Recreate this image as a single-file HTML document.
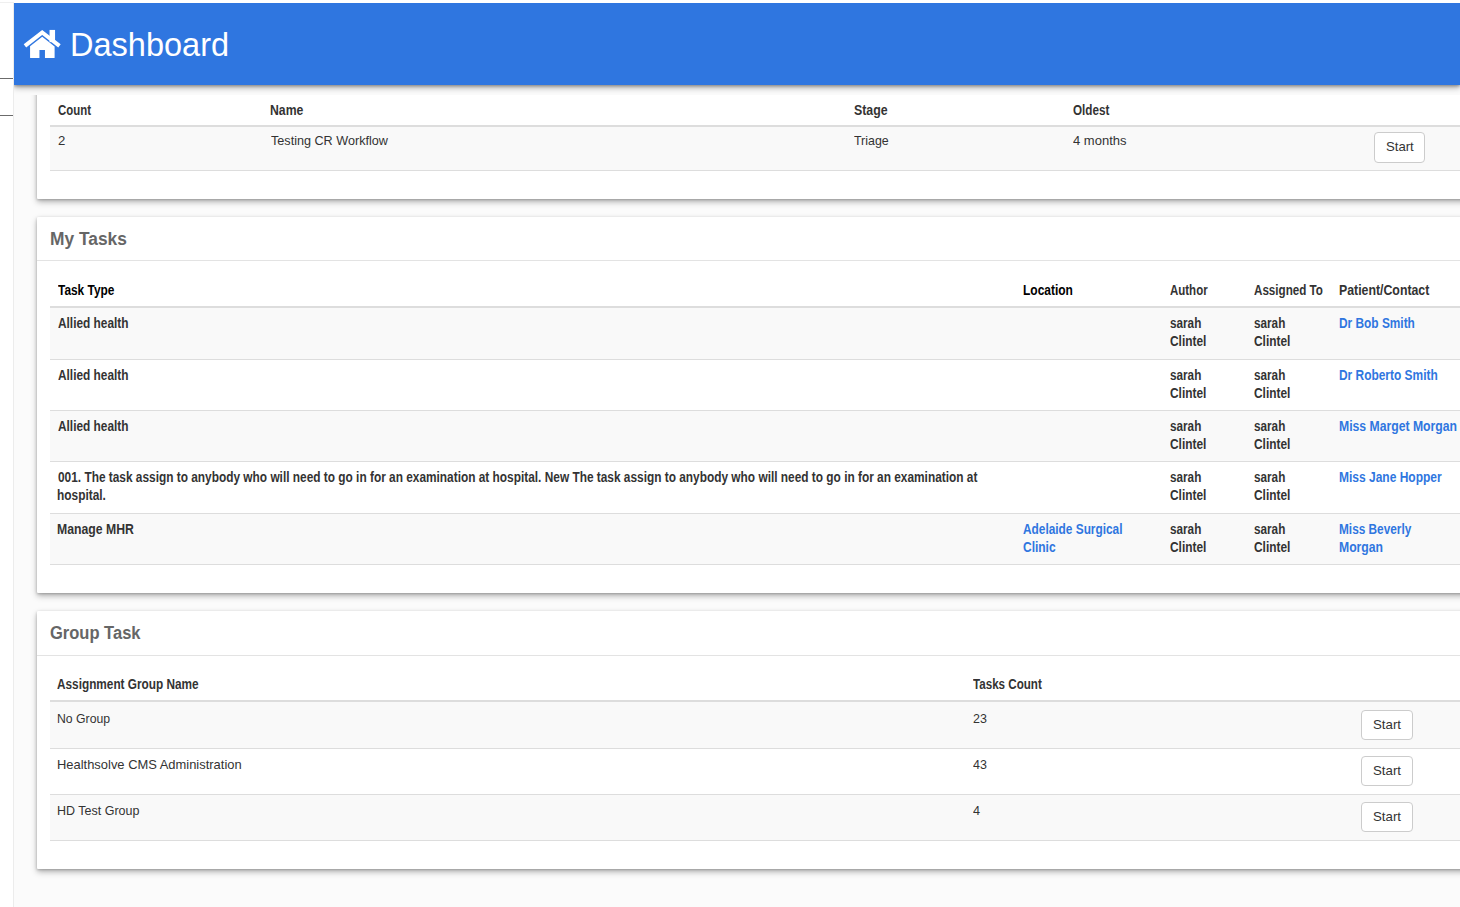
<!DOCTYPE html>
<html>
<head>
<meta charset="utf-8">
<title>Dashboard</title>
<style>
html,body{margin:0;padding:0;}
body{width:1460px;height:907px;overflow:hidden;background:#fff;position:relative;
  font-family:"Liberation Sans",sans-serif;font-size:13px;color:#333;}
#side{position:absolute;left:0;top:3px;width:13px;height:904px;background:#fff;border-right:1px solid #ececec;}
#side .ln{position:absolute;left:0;width:13px;height:1px;background:#6b6b6b;}
#topln{position:absolute;left:0;top:2px;width:14px;height:1px;background:#efefef;}
#main{position:absolute;left:14px;top:3px;width:1446px;height:904px;background:#fbfbfb;}
#hdr{position:absolute;left:14px;top:3px;width:1446px;height:82px;background:#2f76e0;
  box-shadow:0 3px 6px rgba(0,0,0,.28),0 1px 3px rgba(0,0,0,.32);z-index:5;clip-path:inset(0 0 -14px 0);}
#home{position:absolute;left:0;top:0;}
#clip{position:absolute;left:14px;top:95px;width:1446px;height:812px;overflow:hidden;}
.card{position:absolute;left:23px;width:1500px;background:#fff;border-radius:1px;
  box-shadow:0 3px 6px rgba(0,0,0,.28),0 1px 3px rgba(0,0,0,.22);}
.sep{position:absolute;left:0;width:1500px;height:1px;background:#e3e3e3;}
.hb{position:absolute;left:13px;width:1500px;height:2px;background:#ddd;}
.rb{position:absolute;left:13px;width:1500px;height:1px;background:#ddd;}
.st{position:absolute;left:13px;width:1500px;background:#f9f9f9;}
.btn{position:absolute;box-sizing:border-box;width:52px;height:30px;background:#fff;border:1px solid #ccc;border-radius:4px;}
.t{position:absolute;white-space:nowrap;transform-origin:0 0;z-index:10;}
</style>
</head>
<body>
<div id="side"><div class="ln" style="top:75px"></div><div class="ln" style="top:112px"></div></div>
<div id="topln"></div>
<div id="main"></div>
<div id="hdr">
<svg id="home" viewBox="14 3 60 82" width="60" height="82"><g fill="#fff">
<path d="M24.94 45.85 L42.2 32.47 L59.46 45.85" fill="none" stroke="#fff" stroke-width="4" stroke-linejoin="miter" stroke-linecap="butt"/>
<rect x="49.54" y="29.93" width="5.51" height="12.2"/>
<path d="M42.2 36.82 L54.61 46.44 V57.5 q0 .56 -.56 .56 H44.96 V50.06 H39.44 V58.06 H30.63 q-.56 0 -.56 -.56 V46.22 Z"/>
</g></svg>
</div>
<div id="clip">
  <!-- card 1: page y 40..198 => clip-local y -55..103 -->
  <div class="card" style="top:-55px;height:159px;">
    <div class="hb" style="top:85px"></div>
    <div class="st" style="top:87px;height:43px"></div>
    <div class="rb" style="top:130px"></div>
    <div class="btn" style="left:1337px;top:92px;width:51px;height:31px"></div>
  </div>
  <!-- card 2: page y 217..593 => local 122..498 -->
  <div class="card" style="top:122px;height:376px;">
    <div class="sep" style="top:43px"></div>
    <div class="hb" style="top:89px"></div>
    <div class="st" style="top:91px;height:51px"></div>
    <div class="rb" style="top:142px"></div>
    <div class="rb" style="top:193px"></div>
    <div class="st" style="top:194px;height:50px"></div>
    <div class="rb" style="top:244px"></div>
    <div class="rb" style="top:296px"></div>
    <div class="st" style="top:297px;height:50px"></div>
    <div class="rb" style="top:347px"></div>
  </div>
  <!-- card 3: page y 611..869 => local 516..774 -->
  <div class="card" style="top:516px;height:258px;">
    <div class="sep" style="top:44px"></div>
    <div class="hb" style="top:89px"></div>
    <div class="st" style="top:91px;height:46px"></div>
    <div class="rb" style="top:137px"></div>
    <div class="rb" style="top:183px"></div>
    <div class="st" style="top:184px;height:45px"></div>
    <div class="rb" style="top:229px"></div>
    <div class="btn" style="left:1324px;top:99px"></div>
    <div class="btn" style="left:1324px;top:145px"></div>
    <div class="btn" style="left:1324px;top:191px"></div>
  </div>
</div>
<span class="t" id="dash" style="left:70.21px;top:25.00px;font-size:33.5px;line-height:40px;font-weight:400;color:#fff;transform:scaleX(0.9706)">Dashboard</span>
<span class="t" id="h_count" style="left:58.24px;top:101.00px;font-size:14px;line-height:18px;font-weight:700;color:#333;transform:scaleX(0.8151)">Count</span>
<span class="t" id="h_name" style="left:270.08px;top:101.00px;font-size:14px;line-height:18px;font-weight:700;color:#333;transform:scaleX(0.8736)">Name</span>
<span class="t" id="h_stage" style="left:854.14px;top:101.00px;font-size:14px;line-height:18px;font-weight:700;color:#333;transform:scaleX(0.8823)">Stage</span>
<span class="t" id="h_oldest" style="left:1073.07px;top:101.00px;font-size:14px;line-height:18px;font-weight:700;color:#333;transform:scaleX(0.8340)">Oldest</span>
<span class="t" id="c1_2" style="left:58.02px;top:132.00px;font-size:13px;line-height:18px;font-weight:400;color:#333;transform:scaleX(1.0107)">2</span>
<span class="t" id="c1_name" style="left:271.15px;top:132.00px;font-size:13px;line-height:18px;font-weight:400;color:#333;transform:scaleX(0.9711)">Testing CR Workflow</span>
<span class="t" id="c1_stage" style="left:854.14px;top:132.00px;font-size:13px;line-height:18px;font-weight:400;color:#333;transform:scaleX(0.9538)">Triage</span>
<span class="t" id="c1_old" style="left:1073.05px;top:132.00px;font-size:13px;line-height:18px;font-weight:400;color:#333;transform:scaleX(0.9999)">4 months</span>
<span class="t" id="b0" style="left:1386.20px;top:138.00px;font-size:13px;line-height:18px;font-weight:400;color:#333;transform:scaleX(1.0116)">Start</span>
<span class="t" id="t_my" style="left:50.09px;top:227.00px;font-size:18px;line-height:24px;font-weight:700;color:#666;transform:scaleX(0.9642)">My Tasks</span>
<span class="t" id="h_tt" style="left:58.00px;top:281.00px;font-size:14px;line-height:18px;font-weight:700;color:#000;transform:scaleX(0.8488)">Task Type</span>
<span class="t" id="h_loc" style="left:1023.18px;top:281.00px;font-size:14px;line-height:18px;font-weight:700;color:#000;transform:scaleX(0.8560)">Location</span>
<span class="t" id="h_auth" style="left:1170.08px;top:281.00px;font-size:14px;line-height:18px;font-weight:700;color:#333;transform:scaleX(0.8199)">Author</span>
<span class="t" id="h_asg" style="left:1254.13px;top:281.00px;font-size:14px;line-height:18px;font-weight:700;color:#333;transform:scaleX(0.8310)">Assigned To</span>
<span class="t" id="h_pc" style="left:1339.02px;top:281.00px;font-size:14px;line-height:18px;font-weight:700;color:#333;transform:scaleX(0.8795)">Patient/Contact</span>
<span class="t" id="r0_tt" style="left:58.21px;top:314.00px;font-size:14px;line-height:18px;font-weight:700;color:#333;transform:scaleX(0.8465)">Allied health</span>
<span class="t" id="r0_a1" style="left:1169.81px;top:314.00px;font-size:14px;line-height:18px;font-weight:700;color:#333;transform:scaleX(0.8375)">sarah</span>
<span class="t" id="r0_a2" style="left:1170.06px;top:332.00px;font-size:14px;line-height:18px;font-weight:700;color:#333;transform:scaleX(0.8490)">Clintel</span>
<span class="t" id="r0_b1" style="left:1254.06px;top:314.00px;font-size:14px;line-height:18px;font-weight:700;color:#333;transform:scaleX(0.8375)">sarah</span>
<span class="t" id="r0_b2" style="left:1254.06px;top:332.00px;font-size:14px;line-height:18px;font-weight:700;color:#333;transform:scaleX(0.8490)">Clintel</span>
<span class="t" id="r1_tt" style="left:58.21px;top:366.00px;font-size:14px;line-height:18px;font-weight:700;color:#333;transform:scaleX(0.8465)">Allied health</span>
<span class="t" id="r1_a1" style="left:1169.81px;top:366.00px;font-size:14px;line-height:18px;font-weight:700;color:#333;transform:scaleX(0.8375)">sarah</span>
<span class="t" id="r1_a2" style="left:1170.06px;top:384.00px;font-size:14px;line-height:18px;font-weight:700;color:#333;transform:scaleX(0.8490)">Clintel</span>
<span class="t" id="r1_b1" style="left:1254.06px;top:366.00px;font-size:14px;line-height:18px;font-weight:700;color:#333;transform:scaleX(0.8375)">sarah</span>
<span class="t" id="r1_b2" style="left:1254.06px;top:384.00px;font-size:14px;line-height:18px;font-weight:700;color:#333;transform:scaleX(0.8490)">Clintel</span>
<span class="t" id="r2_tt" style="left:58.21px;top:417.00px;font-size:14px;line-height:18px;font-weight:700;color:#333;transform:scaleX(0.8465)">Allied health</span>
<span class="t" id="r2_a1" style="left:1169.81px;top:417.00px;font-size:14px;line-height:18px;font-weight:700;color:#333;transform:scaleX(0.8375)">sarah</span>
<span class="t" id="r2_a2" style="left:1170.06px;top:435.00px;font-size:14px;line-height:18px;font-weight:700;color:#333;transform:scaleX(0.8490)">Clintel</span>
<span class="t" id="r2_b1" style="left:1254.06px;top:417.00px;font-size:14px;line-height:18px;font-weight:700;color:#333;transform:scaleX(0.8375)">sarah</span>
<span class="t" id="r2_b2" style="left:1254.06px;top:435.00px;font-size:14px;line-height:18px;font-weight:700;color:#333;transform:scaleX(0.8490)">Clintel</span>
<span class="t" id="r3_tt" style="left:58.13px;top:468.00px;font-size:14px;line-height:18px;font-weight:700;color:#333;transform:scaleX(0.8478)">001. The task assign to anybody who will need to go in for an examination at hospital. New The task assign to anybody who will need to go in for an examination at</span>
<span class="t" id="r3_tt2" style="left:57.04px;top:486.00px;font-size:14px;line-height:18px;font-weight:700;color:#333;transform:scaleX(0.8491)">hospital.</span>
<span class="t" id="r3_a1" style="left:1169.81px;top:468.00px;font-size:14px;line-height:18px;font-weight:700;color:#333;transform:scaleX(0.8375)">sarah</span>
<span class="t" id="r3_a2" style="left:1170.06px;top:486.00px;font-size:14px;line-height:18px;font-weight:700;color:#333;transform:scaleX(0.8490)">Clintel</span>
<span class="t" id="r3_b1" style="left:1254.06px;top:468.00px;font-size:14px;line-height:18px;font-weight:700;color:#333;transform:scaleX(0.8375)">sarah</span>
<span class="t" id="r3_b2" style="left:1254.06px;top:486.00px;font-size:14px;line-height:18px;font-weight:700;color:#333;transform:scaleX(0.8490)">Clintel</span>
<span class="t" id="r4_tt" style="left:57.09px;top:520.00px;font-size:14px;line-height:18px;font-weight:700;color:#333;transform:scaleX(0.8745)">Manage MHR</span>
<span class="t" id="r4_a1" style="left:1169.81px;top:520.00px;font-size:14px;line-height:18px;font-weight:700;color:#333;transform:scaleX(0.8375)">sarah</span>
<span class="t" id="r4_a2" style="left:1170.06px;top:538.00px;font-size:14px;line-height:18px;font-weight:700;color:#333;transform:scaleX(0.8490)">Clintel</span>
<span class="t" id="r4_b1" style="left:1254.06px;top:520.00px;font-size:14px;line-height:18px;font-weight:700;color:#333;transform:scaleX(0.8375)">sarah</span>
<span class="t" id="r4_b2" style="left:1254.06px;top:538.00px;font-size:14px;line-height:18px;font-weight:700;color:#333;transform:scaleX(0.8490)">Clintel</span>
<span class="t" id="p0" style="left:1339.08px;top:314.00px;font-size:14px;line-height:18px;font-weight:700;color:#2f76e0;transform:scaleX(0.8483)">Dr Bob Smith</span>
<span class="t" id="p1" style="left:1339.07px;top:366.00px;font-size:14px;line-height:18px;font-weight:700;color:#2f76e0;transform:scaleX(0.8516)">Dr Roberto Smith</span>
<span class="t" id="p2" style="left:1339.22px;top:417.00px;font-size:14px;line-height:18px;font-weight:700;color:#2f76e0;transform:scaleX(0.8720)">Miss Marget Morgan</span>
<span class="t" id="p3" style="left:1339.07px;top:468.00px;font-size:14px;line-height:18px;font-weight:700;color:#2f76e0;transform:scaleX(0.8571)">Miss Jane Hopper</span>
<span class="t" id="p4" style="left:1339.09px;top:520.00px;font-size:14px;line-height:18px;font-weight:700;color:#2f76e0;transform:scaleX(0.8442)">Miss Beverly</span>
<span class="t" id="p4b" style="left:1339.03px;top:538.00px;font-size:14px;line-height:18px;font-weight:700;color:#2f76e0;transform:scaleX(0.8702)">Morgan</span>
<span class="t" id="l4" style="left:1023.01px;top:520.00px;font-size:14px;line-height:18px;font-weight:700;color:#2f76e0;transform:scaleX(0.8470)">Adelaide Surgical</span>
<span class="t" id="l4b" style="left:1023.13px;top:538.00px;font-size:14px;line-height:18px;font-weight:700;color:#2f76e0;transform:scaleX(0.8547)">Clinic</span>
<span class="t" id="t_gt" style="left:50.10px;top:621.00px;font-size:18px;line-height:24px;font-weight:700;color:#666;transform:scaleX(0.9171)">Group Task</span>
<span class="t" id="h_agn" style="left:57.01px;top:675.00px;font-size:14px;line-height:18px;font-weight:700;color:#333;transform:scaleX(0.8431)">Assignment Group Name</span>
<span class="t" id="h_tc" style="left:973.19px;top:675.00px;font-size:14px;line-height:18px;font-weight:700;color:#333;transform:scaleX(0.8287)">Tasks Count</span>
<span class="t" id="g0" style="left:57.03px;top:710.00px;font-size:13px;line-height:18px;font-weight:400;color:#333;transform:scaleX(0.9423)">No Group</span>
<span class="t" id="g1" style="left:57.03px;top:756.00px;font-size:13px;line-height:18px;font-weight:400;color:#333;transform:scaleX(0.9943)">Healthsolve CMS Administration</span>
<span class="t" id="g2" style="left:57.05px;top:802.00px;font-size:13px;line-height:18px;font-weight:400;color:#333;transform:scaleX(0.9608)">HD Test Group</span>
<span class="t" id="n0" style="left:973.02px;top:710.00px;font-size:13px;line-height:18px;font-weight:400;color:#333;transform:scaleX(0.9604)">23</span>
<span class="t" id="n1" style="left:973.02px;top:756.00px;font-size:13px;line-height:18px;font-weight:400;color:#333;transform:scaleX(0.9604)">43</span>
<span class="t" id="n2" style="left:973.02px;top:802.00px;font-size:13px;line-height:18px;font-weight:400;color:#333;transform:scaleX(0.9745)">4</span>
<span class="t" id="b1" style="left:1373.15px;top:716.00px;font-size:13px;line-height:18px;font-weight:400;color:#333;transform:scaleX(1.0199)">Start</span>
<span class="t" id="b2" style="left:1373.15px;top:762.00px;font-size:13px;line-height:18px;font-weight:400;color:#333;transform:scaleX(1.0199)">Start</span>
<span class="t" id="b3" style="left:1373.15px;top:808.00px;font-size:13px;line-height:18px;font-weight:400;color:#333;transform:scaleX(1.0199)">Start</span>
</body>
</html>
